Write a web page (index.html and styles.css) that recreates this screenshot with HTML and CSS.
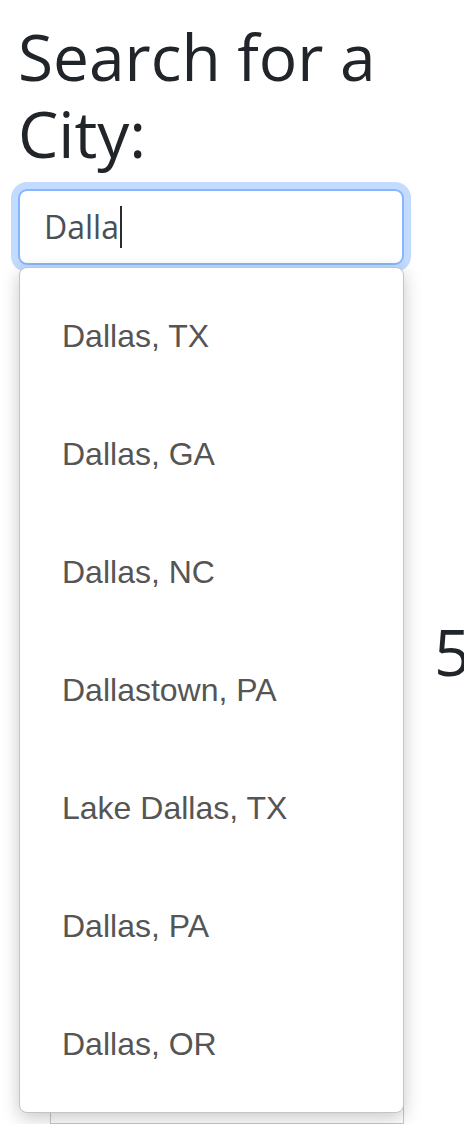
FILE: index.html
```html
<!DOCTYPE html>
<html lang="en">
<head>
<meta charset="utf-8">
<title>City Search</title>
<link rel="stylesheet" href="styles.css">
</head>
<body>
<main class="page">
  <h2 class="title">Search for a City:</h2>
  <div class="search">
    <div class="search-input" role="textbox" aria-label="City">Dalla<span class="caret"></span></div>
    <ul class="suggestions" role="listbox">
      <li class="suggestion">Dallas, TX</li>
      <li class="suggestion">Dallas, GA</li>
      <li class="suggestion">Dallas, NC</li>
      <li class="suggestion">Dallastown, PA</li>
      <li class="suggestion">Lake Dallas, TX</li>
      <li class="suggestion">Dallas, PA</li>
      <li class="suggestion">Dallas, OR</li>
    </ul>
  </div>
  <section class="results">
    <div class="card"></div>
    <div class="temp">5</div>
  </section>
</main>
</body>
</html>
```

FILE: styles.css
```css
html, body {
  margin: 0;
  padding: 0;
  background: #fff;
  overflow: hidden;
}

.page {
  width: 386px;
  padding: 19px 0 0 18px;
  font-family: "Open Sans", "Noto Sans", sans-serif;
  color: #212529;
}

.title {
  margin: 0 0 16px;
  font-size: 64px;
  font-weight: 400;
  line-height: 1.2;
  color: #212529;
}

.search {
  position: relative;
}

.search-input {
  box-sizing: border-box;
  height: 76px;
  padding: 12px 24px;
  border: 2px solid #86b7fe;
  border-radius: 9px;
  box-shadow: 0 0 0 7px rgba(13, 110, 253, 0.25);
  font-size: 32px;
  line-height: 48px;
  color: #495057;
  background: #fff;
}

.caret {
  display: inline-block;
  width: 2px;
  height: 42px;
  margin-left: 1px;
  vertical-align: -9px;
  background: #2b2b2b;
}

.suggestions {
  position: absolute;
  z-index: 2;
  top: calc(100% + 2px);
  left: 1px;
  right: 0;
  margin: 0;
  padding: 9px 0;
  list-style: none;
  background: #fff;
  border: 1px solid #c4c4c4;
  border-radius: 8px;
  box-shadow: 0 5px 18px rgba(0, 0, 0, 0.22);
}

.suggestion {
  padding: 35px 40px 35px 42px;
  font-family: "Liberation Sans", Arial, sans-serif;
  font-size: 32px;
  line-height: 48px;
  color: #555;
}

.results {
  display: flex;
  align-items: flex-start;
  margin-top: 30px;
}

.card {
  flex: 0 0 auto;
  box-sizing: border-box;
  width: 354px;
  height: 829px;
  margin-left: 32px;
  border: 1px solid #c8c8c8;
  background: #fff;
}

.temp {
  flex: 0 0 auto;
  margin-left: 30px;
  margin-top: 319px;
  font-size: 64px;
  line-height: 1.2;
  color: #212529;
}
```
